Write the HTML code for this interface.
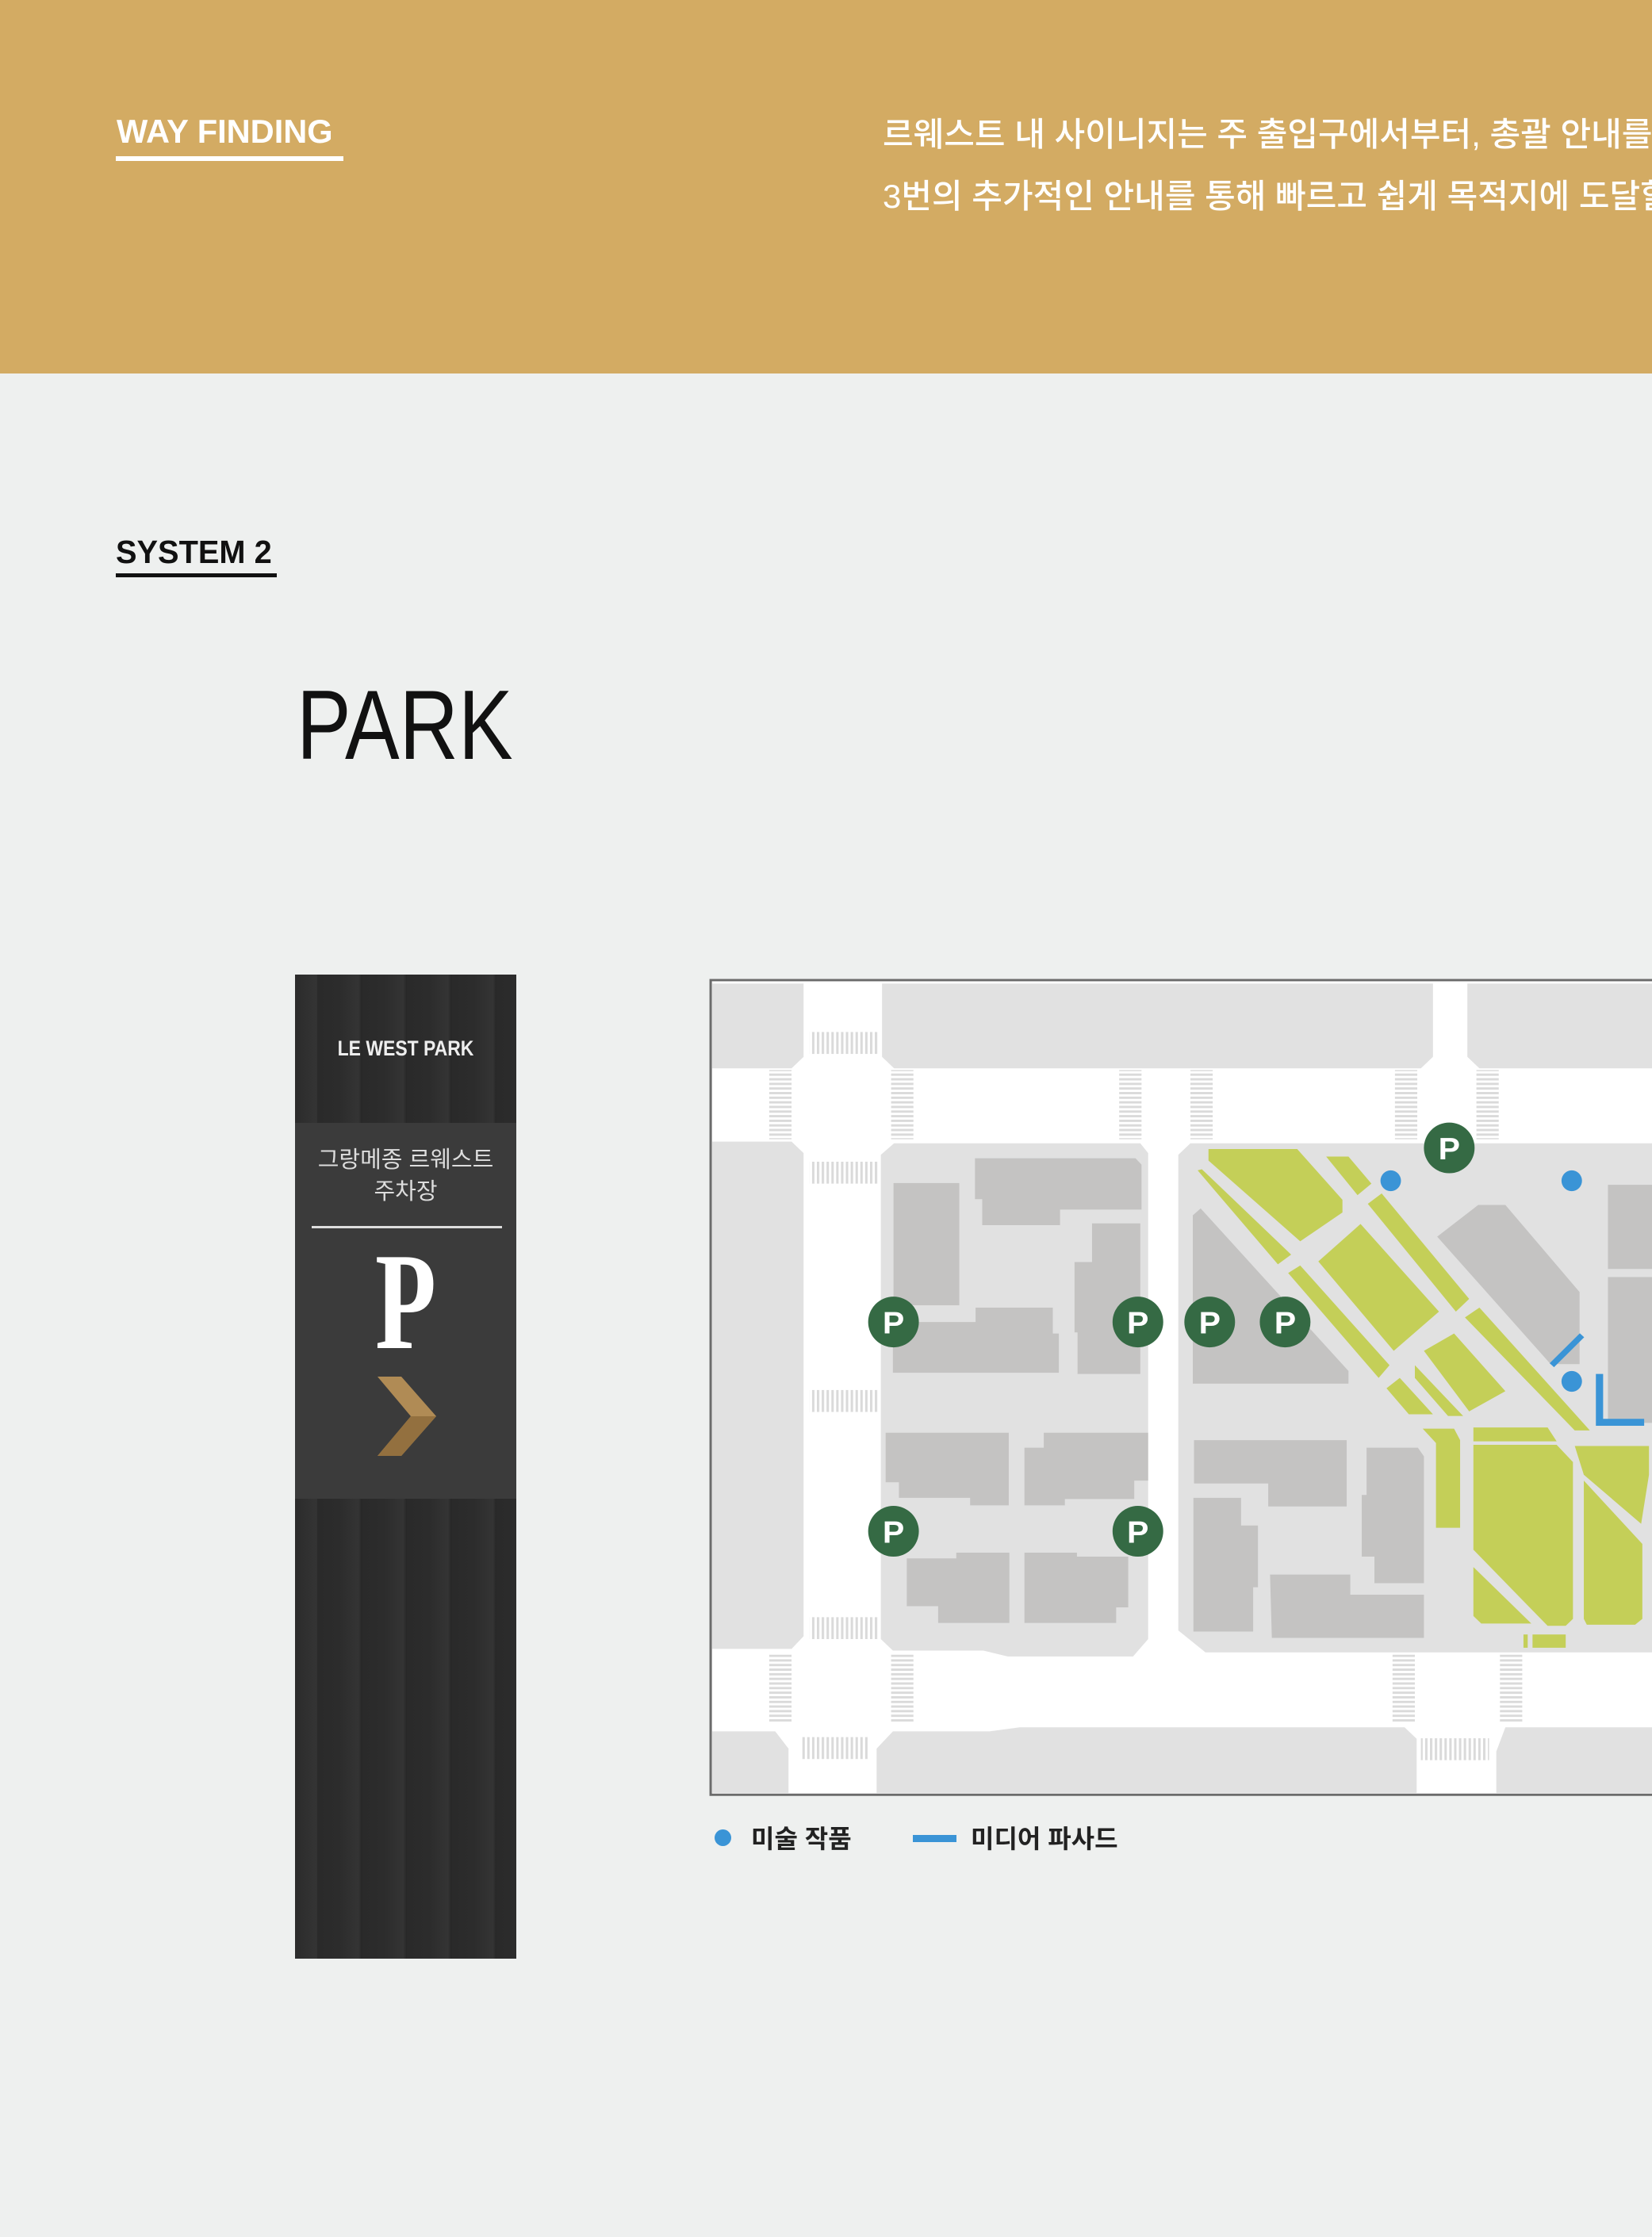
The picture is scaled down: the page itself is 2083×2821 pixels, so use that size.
<!DOCTYPE html>
<html><head><meta charset="utf-8"><style>
*{margin:0;padding:0;box-sizing:border-box}
body{width:2083px;height:2821px;background:#eef0ef;position:relative;overflow:hidden;font-family:"Liberation Sans","Noto Sans CJK KR",sans-serif}
.hdr{position:absolute;left:0;top:0;width:2083px;height:471px;background:#d3ab63}
.t{position:absolute;white-space:nowrap}
.ul{position:absolute;height:6px}
.sign{position:absolute;left:372px;top:1229px;width:279px;height:1241px;background:#3b3b3b;overflow:hidden}
.rib{position:absolute;left:0;width:279px;background:#2b2b2b;
background-image:repeating-linear-gradient(90deg,#2a2a2a 0px,#2c2c2c 28px,#343434 52px,#262626 56.5px);background-position:28px 0}
</style></head><body>
<div class="hdr"></div>
<div class="t" style="left:147px;top:142px;font-size:42px;font-weight:bold;color:#fff;transform:scaleX(0.99);transform-origin:left top">WAY FINDING</div>
<div class="ul" style="left:146px;top:197px;width:287px;background:#fff"></div>
<div class="t" style="left:1113px;top:136px;font-size:42px;color:#fff;font-weight:500">르웨스트 내 사이니지는 주 출입구에서부터, 총괄 안내를 통해</div>
<div class="t" style="left:1113px;top:214px;font-size:42px;color:#fff;font-weight:500">3번의 추가적인 안내를 통해 빠르고 쉽게 목적지에 도달할 수 있도록</div>

<div class="t" style="left:146px;top:673px;font-size:41px;font-weight:bold;color:#111;transform:scaleX(0.97);transform-origin:left top">SYSTEM 2</div>
<div class="ul" style="left:146px;top:723px;width:203px;background:#111;height:5px"></div>

<div class="t" style="left:374px;top:840px;font-size:124px;color:#111;transform:scaleX(0.83);transform-origin:left top;line-height:150px">PARK</div>

<div class="sign">
  <div class="rib" style="top:0;height:187px"></div>
  <div class="t" style="left:0;width:279px;text-align:center;top:78px;font-size:27px;color:#eee;font-weight:bold;transform:scaleX(0.85)">LE WEST PARK</div>
  <div class="t" style="left:0;width:279px;text-align:center;top:214px;font-size:29px;line-height:40px;color:#ddd">그랑메종 르웨스트<br>주차장</div>
  <div style="position:absolute;left:21px;top:317px;width:240px;height:3px;background:#ddd"></div>
  <div class="t" style="left:0;width:279px;text-align:center;top:325px;font-size:175px;line-height:175px;color:#fff;font-family:'Liberation Serif',serif;font-weight:bold;transform:scaleX(0.72)">P</div>
  <svg style="position:absolute;left:102px;top:507px" width="78" height="100" viewBox="0 0 78 100"><polygon points="2,0 32,0 76,50 32,100 2,100 44,50" fill="#b08b55"/><polygon points="44,50 76,50 32,100 2,100" fill="#93703f"/></svg>
  <div class="rib" style="top:661px;height:580px"></div>
</div>

<svg style="position:absolute;left:890px;top:1220px" width="1193" height="1140" viewBox="0 0 1568 1568" preserveAspectRatio="none">
<defs>
<pattern id="vs" width="8" height="10" patternUnits="userSpaceOnUse"><rect width="4" height="10" fill="#dadada"/></pattern>
<pattern id="hs" width="10" height="8" patternUnits="userSpaceOnUse"><rect width="10" height="4" fill="#dadada"/></pattern>
</defs>
<rect x="8" y="22" width="1600" height="1413" fill="#fff" stroke="#6b6b6b" stroke-width="4"/>
<g fill="#e1e1e1">
<polygon points="10,28 162,28 162,155 142,175 10,175"/>
<polygon points="292,28 1205,28 1205,155 1185,175 312,175 292,155"/>
<polygon points="1262,28 1568,28 1568,175 1282,175 1262,155"/>
<polygon points="10,302 142,302 162,322 162,1160 142,1182 10,1182"/>
<polygon points="312,305 720,305 733,322 733,1165 708,1195 500,1195 460,1185 310,1185 290,1165 290,325"/>
<polygon points="803,305 1568,305 1568,1188 828,1188 783,1150 783,325"/>
<polygon points="10,1325 115,1325 137,1355 137,1432 10,1432"/>
<polygon points="310,1325 470,1325 520,1318 1158,1318 1178,1338 1178,1432 283,1432 283,1355"/>
<polygon points="1325,1318 1568,1318 1568,1432 1310,1432 1310,1360"/>
</g>
<g>
<rect x="172" y="112" width="113" height="38" fill="url(#vs)"/>
<rect x="172" y="337" width="113" height="38" fill="url(#vs)"/>
<rect x="172" y="733" width="113" height="38" fill="url(#vs)"/>
<rect x="172" y="1127" width="113" height="38" fill="url(#vs)"/>
<rect x="157" y="1335" width="113" height="38" fill="url(#vs)"/>
<rect x="1185" y="1337" width="113" height="38" fill="url(#vs)"/>
<rect x="105" y="178" width="37" height="120" fill="url(#hs)"/>
<rect x="307" y="178" width="37" height="120" fill="url(#hs)"/>
<rect x="685" y="178" width="37" height="120" fill="url(#hs)"/>
<rect x="803" y="178" width="37" height="120" fill="url(#hs)"/>
<rect x="1142" y="178" width="37" height="120" fill="url(#hs)"/>
<rect x="1277" y="178" width="37" height="120" fill="url(#hs)"/>
<rect x="105" y="1192" width="37" height="118" fill="url(#hs)"/>
<rect x="307" y="1192" width="37" height="118" fill="url(#hs)"/>
<rect x="1138" y="1192" width="37" height="118" fill="url(#hs)"/>
<rect x="1316" y="1192" width="37" height="118" fill="url(#hs)"/>
</g>
<g fill="#c4c3c2">
<rect x="311" y="374" width="109" height="212"/>
<polygon points="446,331 712,331 722,342 722,420 587,420 587,447 458,447 458,402 446,402"/>
<polygon points="640,444 720,444 720,705 616,705 616,633 611,633 611,511 640,511"/>
<polygon points="447,590 575,590 575,635 585,635 585,703 310,703 310,615 447,615"/>
<polygon points="298,807 502,807 502,933 438,933 438,920 320,920 320,893 298,893"/>
<polygon points="560,807 733,807 733,890 710,890 710,922 595,922 595,933 528,933 528,833 560,833"/>
<polygon points="415,1015 503,1015 503,1137 385,1137 385,1108 333,1108 333,1025 415,1025"/>
<polygon points="528,1015 615,1015 615,1022 700,1022 700,1110 680,1110 680,1137 528,1137"/>
<polygon points="807,430 820,418 1065,700 1065,722 807,722"/>
<polygon points="809,820 1062,820 1062,935 932,935 932,895 809,895"/>
<polygon points="808,920 887,920 887,968 915,968 915,1075 907,1075 907,1152 808,1152"/>
<polygon points="935,1053 1068,1053 1068,1088 1190,1088 1190,1163 938,1163"/>
<polygon points="1095,833 1180,833 1190,848 1190,1068 1108,1068 1108,1022 1087,1022 1087,915 1095,915"/>
<polygon points="1212,467 1280,412 1325,412 1448,563 1448,688 1400,688"/>
<rect x="1495" y="377" width="73" height="146"/>
<rect x="1495" y="537" width="73" height="253"/>
</g>
<g fill="#c4cf58">
<polygon points="833,315 980,315 1055,403 1055,425 985,475 833,335"/>
<polygon points="1028,328 1065,328 1103,375 1080,395"/>
<polygon points="815,352 822,350 970,498 948,515"/>
<polygon points="1015,510 1085,445 1215,597 1140,665"/>
<polygon points="1097,410 1120,392 1265,575 1243,597"/>
<polygon points="965,530 985,517 1133,690 1115,712"/>
<polygon points="1190,665 1240,635 1325,735 1265,770"/>
<polygon points="1128,730 1150,712 1205,775 1165,775"/>
<polygon points="1175,690 1255,778 1230,778 1175,712"/>
<polygon points="1258,607 1282,590 1465,803 1440,803"/>
<polygon points="1188,800 1240,800 1250,820 1250,972 1210,972 1210,825"/>
<polygon points="1272,798 1395,798 1410,822 1272,822"/>
<polygon points="1272,828 1410,828 1437,858 1437,1130 1425,1142 1395,1142 1272,1010"/>
<polygon points="1272,1040 1368,1138 1285,1138 1272,1125"/>
<polygon points="1440,830 1563,830 1563,880 1550,965 1455,880"/>
<polygon points="1455,890 1552,1000 1552,1130 1540,1140 1460,1140 1455,1130"/>
<rect x="1370" y="1157" width="55" height="23"/>
<rect x="1355" y="1157" width="7" height="23"/>
</g>
<g fill="#3a94d6">
<ellipse cx="1135" cy="370" rx="17" ry="18"/><ellipse cx="1435" cy="370" rx="17" ry="18"/><ellipse cx="1435" cy="718" rx="17" ry="18"/>
</g>
<line x1="1402" y1="690" x2="1452" y2="638" stroke="#3a94d6" stroke-width="10"/>
<polyline points="1481,705 1481,789 1555,789" fill="none" stroke="#3a94d6" stroke-width="12"/>
<g fill="#356a44">
<ellipse cx="311" cy="615" rx="42" ry="44"/><ellipse cx="716" cy="615" rx="42" ry="44"/><ellipse cx="835" cy="615" rx="42" ry="44"/><ellipse cx="960" cy="615" rx="42" ry="44"/>
<ellipse cx="311" cy="978" rx="42" ry="44"/><ellipse cx="716" cy="978" rx="42" ry="44"/><ellipse cx="1232" cy="313" rx="42" ry="44"/>
</g>
<g fill="#fff" font-family="Liberation Sans, sans-serif" font-size="54" font-weight="bold" text-anchor="middle">
<text x="311" y="635">P</text><text x="716" y="635">P</text><text x="835" y="635">P</text><text x="960" y="635">P</text>
<text x="311" y="998">P</text><text x="716" y="998">P</text><text x="1232" y="333">P</text>
</g>
</svg>

<div style="position:absolute;left:901px;top:2307px;width:21px;height:21px;border-radius:50%;background:#3a94d6"></div>
<div class="t" style="left:947px;top:2294px;font-size:32px;color:#222;font-weight:bold">미술 작품</div>
<div style="position:absolute;left:1151px;top:2314px;width:55px;height:9px;background:#3a94d6"></div>
<div class="t" style="left:1224px;top:2294px;font-size:32px;color:#222;font-weight:bold">미디어 파사드</div>
</body></html>
